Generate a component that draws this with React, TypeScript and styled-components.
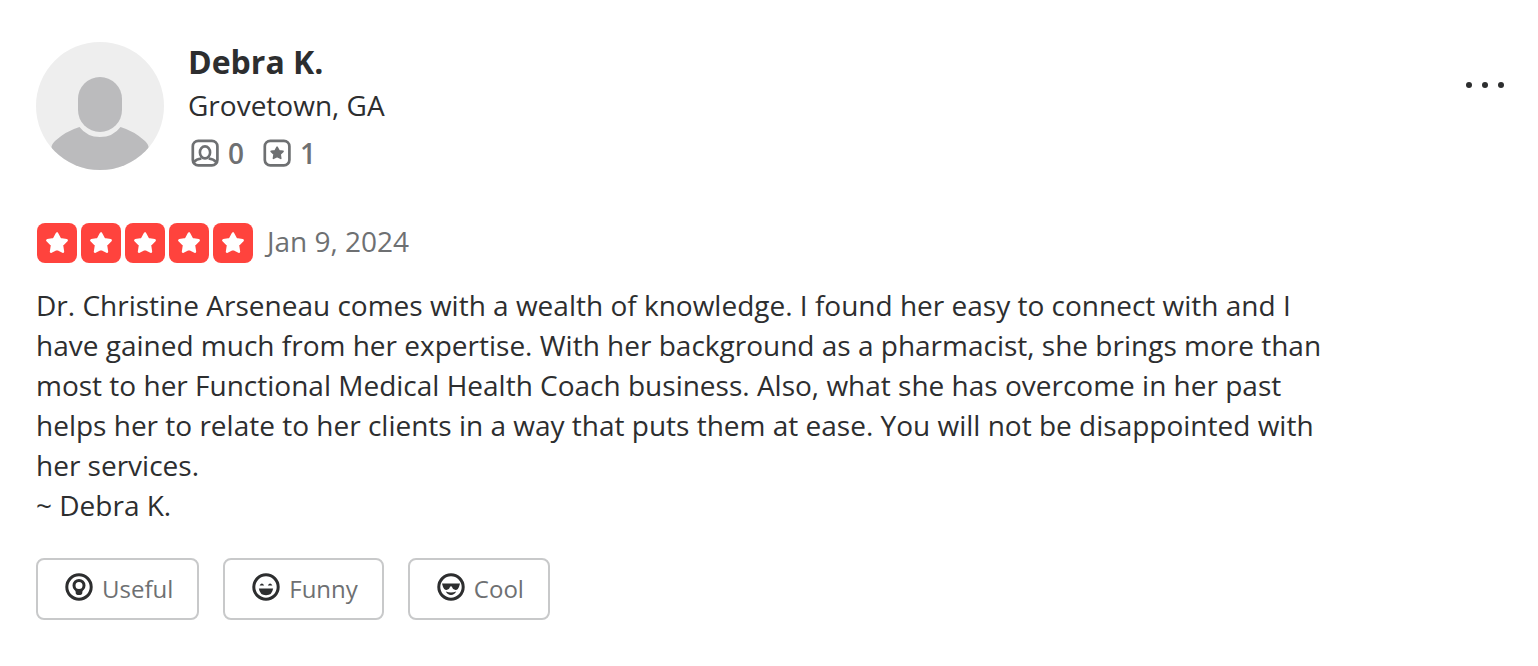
import React from "react";
import styled, { createGlobalStyle } from "styled-components";

const GlobalStyle = createGlobalStyle`
  * { box-sizing: border-box; }
  body {
    margin: 0;
    background: #fff;
    color: #2d2e2f;
    font-family: "Open Sans", "Noto Sans", sans-serif;
  }
`;

const Review = styled.article`
  padding: 42px 32px 44px 36px;
`;

const Header = styled.header`
  display: flex;
  align-items: center;
  justify-content: space-between;
`;

const Passport = styled.div`
  display: flex;
  align-items: flex-start;
  gap: 24px;
`;

const Avatar = styled.svg`
  width: 128px;
  height: 128px;
  flex: none;
`;

const Name = styled.h2`
  margin: 0;
  font-size: 32px;
  line-height: 40px;
  font-weight: 700;
`;

const Place = styled.p`
  margin: 3px 0 8px;
  font-size: 28px;
  line-height: 40px;
`;

const Stats = styled.ul`
  display: flex;
  gap: 16px;
  margin: 0;
  padding: 0;
  list-style: none;
`;

const Stat = styled.li`
  display: flex;
  align-items: center;
  gap: 6px;
  color: #6e7072;
  font-size: 28px;
  line-height: 40px;
  font-weight: 600;
`;

const Icon = styled.svg`
  width: 34px;
  height: 34px;
  flex: none;
  fill: none;
  stroke: none;
`;

const MoreButton = styled.button`
  display: flex;
  align-self: flex-start;
  margin-top: 24px;
  padding: 0;
  border: 0;
  background: none;
  color: #2d2e2f;
  cursor: pointer;
`;

const RatingRow = styled.div`
  display: flex;
  align-items: flex-start;
  gap: 13px;
  margin-top: 49px;
`;

const Stars = styled.div`
  display: flex;
  gap: 4px;
  padding: 1px;
`;

const StarTile = styled.svg`
  width: 40px;
  height: 40px;
  border-radius: 8px;
  background: #ff433d;
`;

const PostedOn = styled.time`
  color: #6e7072;
  font-size: 28px;
  line-height: 38px;
`;

const Comment = styled.p`
  max-width: 1304px;
  margin: 21px 0 33px;
  font-size: 28px;
  line-height: 40px;
`;

const Reactions = styled.div`
  display: flex;
  gap: 24px;
`;

const ReactionButton = styled.button`
  display: flex;
  align-items: center;
  gap: 6px;
  height: 62px;
  padding: 0 24px;
  border: 2px solid #c8c9ca;
  border-radius: 8px;
  background: #fff;
  color: #6e7072;
  font-family: inherit;
  font-size: 24px;
  line-height: 32px;
  cursor: pointer;

  ${Icon} {
    margin-bottom: 4px;
    color: #2d2e2f;
  }
`;

const StarShape = ({ color, transform }: { color: string; transform?: string }) => (
  <path
    d="M20 10.5 L23.1 16.3 L29.6 17.4 L24.9 22.1 L25.9 28.6 L20 25.7 L14.1 28.6 L15.1 22.1 L10.4 17.4 L16.9 16.3 Z"
    transform={transform}
    fill={color}
    stroke={color}
    strokeWidth="2.6"
    strokeLinejoin="round"
  />
);

const FriendsIcon = () => (
  <Icon viewBox="0 0 34 34" aria-hidden="true">
    <rect x="4.8" y="4.8" width="24.6" height="24.6" rx="5.5" stroke="currentColor" strokeWidth="2.7" />
    <ellipse cx="17" cy="16.4" rx="5.1" ry="6" stroke="currentColor" strokeWidth="2.6" />
    <path d="M5.5 26.2 Q8.5 23.1 13.4 22.5 M28.5 26.2 Q25.5 23.1 20.6 22.5" stroke="currentColor" strokeWidth="2.7" />
  </Icon>
);

const ReviewsIcon = () => (
  <Icon viewBox="0 0 34 34" aria-hidden="true">
    <rect x="4.8" y="4.8" width="24.6" height="24.6" rx="5.5" stroke="currentColor" strokeWidth="2.7" />
    <StarShape color="currentColor" transform="translate(4.7 4.6) scale(.62)" />
  </Icon>
);

const UsefulIcon = () => (
  <Icon viewBox="0 0 34 34" aria-hidden="true">
    <circle cx="17" cy="17" r="12.2" stroke="currentColor" strokeWidth="3" />
    <circle cx="17" cy="15.4" r="5" stroke="currentColor" strokeWidth="3" />
    <path d="M13.2 19.3 H20.8 L20.2 23.2 Q19.8 24.9 18.4 24.9 H15.6 Q14.2 24.9 13.8 23.2 Z" fill="currentColor" />
  </Icon>
);

const FunnyIcon = () => (
  <Icon viewBox="0 0 34 34" aria-hidden="true">
    <circle cx="17" cy="17" r="12.2" stroke="currentColor" strokeWidth="3" />
    <path d="M10.6 15.6 Q12.9 11.4 15.2 15.6 Z M18.8 15.6 Q21.1 11.4 23.4 15.6 Z" fill="currentColor" />
    <path d="M9.9 18.5 H24.1 Q23.3 25.2 17 25.2 Q10.7 25.2 9.9 18.5 Z" fill="currentColor" />
  </Icon>
);

const CoolIcon = () => (
  <Icon viewBox="0 0 34 34" aria-hidden="true">
    <circle cx="17" cy="17" r="12.2" stroke="currentColor" strokeWidth="3" />
    <path d="M8 13.5 H26 L25.2 16.2 Q24.2 19.9 21.6 19.9 Q18.7 19.9 17.9 16.6 H16.1 Q15.3 19.9 12.4 19.9 Q9.8 19.9 8.8 16.2 Z" fill="currentColor" />
    <path d="M11.8 21.6 Q17 23.4 22.2 21.6 Q20.4 25 17 25 Q13.6 25 11.8 21.6 Z" fill="currentColor" />
  </Icon>
);

const reactions = [
  { label: "Useful", Glyph: UsefulIcon },
  { label: "Funny", Glyph: FunnyIcon },
  { label: "Cool", Glyph: CoolIcon },
];

export default function App() {
  return (
    <>
      <GlobalStyle />
      <Review>
        <Header>
          <Passport>
            <Avatar viewBox="0 0 128 128" aria-hidden="true">
              <clipPath id="avatar-disc">
                <circle cx="64" cy="64" r="64" />
              </clipPath>
              <g clipPath="url(#avatar-disc)">
                <rect width="128" height="128" fill="#eee" />
                <rect x="42" y="35" width="44" height="55" rx="22" fill="#bbbbbd" />
                <path
                  d="M43.5 85 Q30 89 19 99 Q15 103 15.5 106 V128 H112.5 V106 Q113 103 109 99 Q98 89 84.5 85 Q77 95 64 95 Q51 95 43.5 85 Z"
                  fill="#bbbbbd"
                />
              </g>
            </Avatar>
            <div>
              <Name>Debra K.</Name>
              <Place>Grovetown, GA</Place>
              <Stats>
                <Stat>
                  <FriendsIcon />0
                </Stat>
                <Stat>
                  <ReviewsIcon />1
                </Stat>
              </Stats>
            </div>
          </Passport>
          <MoreButton type="button" aria-label="More options">
            <svg width="42" height="38" viewBox="0 0 42 38" fill="currentColor">
              <circle cx="5" cy="19" r="3" />
              <circle cx="21" cy="19" r="3" />
              <circle cx="37" cy="19" r="3" />
            </svg>
          </MoreButton>
        </Header>

        <RatingRow>
          <Stars role="img" aria-label="5 star rating">
            {[1, 2, 3, 4, 5].map((n) => (
              <StarTile key={n} viewBox="0 0 40 40">
                <StarShape color="#fff" />
              </StarTile>
            ))}
          </Stars>
          <PostedOn dateTime="2024-01-09">Jan 9, 2024</PostedOn>
        </RatingRow>

        <Comment>
          Dr. Christine Arseneau comes with a wealth of knowledge. I found her easy to connect with
          and I have gained much from her expertise. With her background as a pharmacist, she brings
          more than most to her Functional Medical Health Coach business. Also, what she has overcome
          in her past helps her to relate to her clients in a way that puts them at ease. You will
          not be disappointed with her services.
          <br />~ Debra K.
        </Comment>

        <Reactions>
          {reactions.map(({ label, Glyph }) => (
            <ReactionButton key={label} type="button">
              <Glyph />
              {label}
            </ReactionButton>
          ))}
        </Reactions>
      </Review>
    </>
  );
}
